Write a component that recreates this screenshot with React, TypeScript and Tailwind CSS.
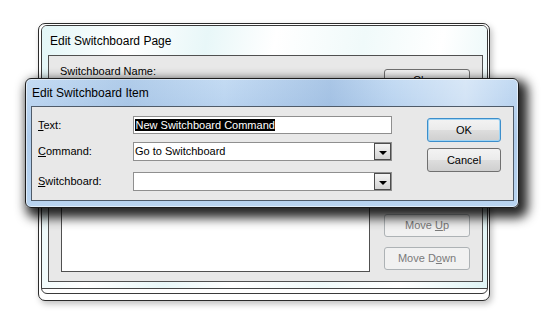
import React from "react";

function Btn({ children, className = "", h = "h-[24px]", disabled = false, focus = false }: { children?: React.ReactNode; className?: string; h?: string; disabled?: boolean; focus?: boolean }) {
  return (
    <div
      className={`flex ${h} items-center justify-center rounded-[3px] border text-[11px] ${
        focus ? "border-[#3c8ecb] shadow-[inset_0_0_0_1px_#9fd4f4]" : disabled ? "border-[#adb2b5]" : "border-[#707070]"
      } ${
        disabled
          ? "bg-[#f1f1f1] text-[#7a7a7a]"
          : "bg-[linear-gradient(to_bottom,#f3f3f3_0%,#ebebeb_48%,#dddddd_52%,#cfcfcf_100%)] text-black"
      } ${className}`}
    >
      {children}
    </div>
  );
}

function Select({ value }: { value?: string }) {
  return (
    <div className="flex h-[19px] w-[259px] items-center border border-[#8f8f8f] bg-white">
      <span className="flex-1 pl-[1px] text-[11px] leading-none">{value}</span>
      <div className="flex h-[17px] w-[17px] items-center justify-center border border-[#4d4d4d] bg-[linear-gradient(to_bottom,#f4f4f4,#d4d4d4)]">
        <div className="mt-[2px] h-0 w-0 border-x-[4px] border-t-[4px] border-x-transparent border-t-black" />
      </div>
    </div>
  );
}

export default function App() {
  return (
    <div className="relative h-[326px] w-[553px] overflow-hidden bg-white font-['Liberation_Sans',Arial,sans-serif] text-black">
      {/* back window: Edit Switchboard Page */}
      <div className="absolute left-[38px] top-[23px] h-[278px] w-[452px] rounded-[7px] border border-[#2b2b2b] bg-white shadow-[2px_3px_6px_rgba(0,0,0,0.25)]">
        <div className="ml-[2px] mr-[1px] mt-[1px] h-[269px] rounded-[6px] border border-[#3a3a3a] bg-white">
          <div className="flex h-[263px] flex-col rounded-t-[5px] border-b border-[#444] bg-[linear-gradient(100deg,#e2f6f7_0%,#ffffff_18%,#e8f7f8_34%,#ffffff_48%,#f0fafa_66%,#ffffff_82%,#dff4f5_100%)] pb-[6px] pl-[6px] pr-[4px]">
            <div className="flex h-[29px] items-center pl-[2px] text-[12px]">Edit Switchboard Page</div>
            <div className="flex flex-1 border border-[#505050] bg-[#e8e8e8]">
              <div className="flex flex-1 flex-col pb-[9px] pl-[12px] pt-[9px]">
                <div className="-ml-[1px] text-[11px] leading-[13px]">Switchboard Name:</div>
                <div className="mt-[4px] h-[18px] w-[308px] border border-[#8f8f8f] bg-white" />
                <div className="mt-[6px] text-[11px] leading-[13px]">Items on this Switchboard:</div>
                <div className="mt-[3px] w-[309px] flex-1 border border-[#505050] bg-white" />
              </div>
              <div className="mr-[12px] flex w-[86px] flex-col pb-[11px] pt-[13px]">
                <Btn h="h-[23px]" className="border-[#3c3c3c]">Close</Btn>
                <Btn h="h-[23px]" className="mt-[10px]">New...</Btn>
                <Btn h="h-[23px]" className="mt-[10px]">Edit...</Btn>
                <Btn h="h-[23px]" className="mt-[10px]">Delete</Btn>
                <div className="flex-1" />
                <Btn h="h-[23px]" disabled>
                  <span>
                    Move <u>U</u>p
                  </span>
                </Btn>
                <Btn h="h-[23px]" disabled className="mt-[10px]">
                  <span>
                    Move D<u>o</u>wn
                  </span>
                </Btn>
              </div>
            </div>
          </div>
        </div>
      </div>

      {/* front window: Edit Switchboard Item */}
      <div className="absolute left-[25px] top-[78px] flex h-[130px] w-[494px] flex-col rounded-[6px] border border-[#1c1c1c] bg-[linear-gradient(to_bottom,#c4dbf3_0%,#aecbeb_45%,#b9d4f0_100%)] pb-[6px] pl-[5px] pr-[4px] shadow-[5px_6px_11px_4px_rgba(0,0,0,0.85),inset_0_0_0_1px_rgba(255,255,255,0.55)]">
        <div className="flex h-[27px] items-center bg-[linear-gradient(90deg,transparent_0%,rgba(120,160,205,0.25)_20%,transparent_40%,rgba(110,150,200,0.3)_62%,transparent_75%,rgba(255,255,255,0.35)_90%,transparent_100%)] pl-[1px] text-[12px]">
          Edit Switchboard Item
        </div>
        <div className="flex flex-1 border border-[#4f5b69] bg-[#e8e8e8]">
          <div className="flex flex-1 flex-col pl-[6px] pt-[9px] text-[11px]">
            <div className="flex h-[18px] items-center">
              <span className="w-[95px]">
                <u>T</u>ext:
              </span>
              <div className="flex h-[18px] w-[259px] items-center border border-[#8f8f8f] bg-white">
                <span className="ml-[1px] bg-black px-[0.5px] leading-[12px] text-white">New Switchboard Command</span>
              </div>
            </div>
            <div className="mt-[8px] flex items-center">
              <span className="w-[95px]">
                <u>C</u>ommand:
              </span>
              <Select value="Go to Switchboard" />
            </div>
            <div className="mt-[11px] flex items-center">
              <span className="w-[95px]">
                <u>S</u>witchboard:
              </span>
              <Select />
            </div>
          </div>
          <div className="mr-[12px] flex w-[74px] flex-col pt-[11px]">
            <Btn focus>OK</Btn>
            <Btn className="mt-[6px]">Cancel</Btn>
          </div>
        </div>
      </div>
    </div>
  );
}
